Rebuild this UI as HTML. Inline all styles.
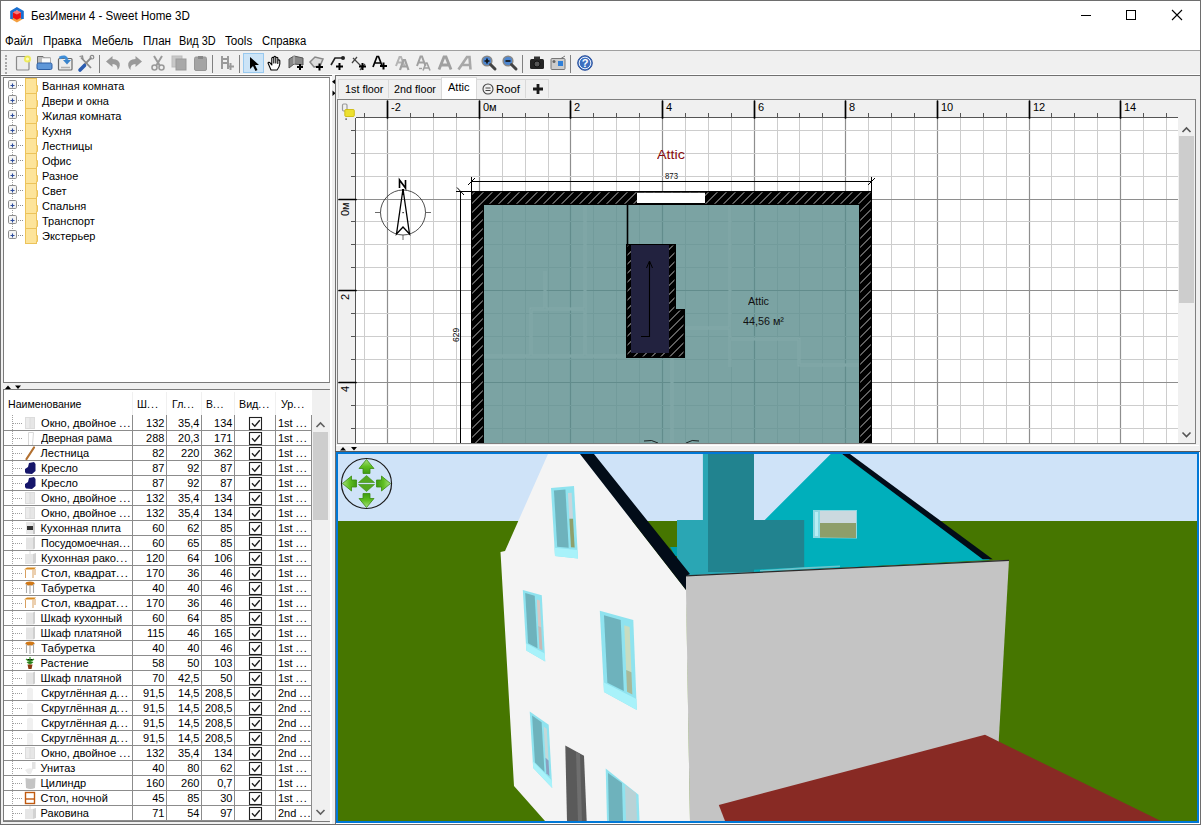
<!DOCTYPE html><html><head><meta charset="utf-8"><style>
*{margin:0;padding:0;box-sizing:border-box}
html,body{width:1201px;height:825px;overflow:hidden;background:#f0f0f0;font-family:"Liberation Sans",sans-serif;font-size:12px;color:#000;position:relative}
.a{position:absolute}
.t{position:absolute;white-space:nowrap;line-height:1}
svg{position:absolute;overflow:visible}
</style></head><body>

<div class="a" style="left:0px;top:0px;width:1201px;height:50px;background:#fff;"></div>
<div class="a" style="left:0px;top:50px;width:1201px;height:1px;background:#a0a0a0;"></div>
<svg style="left:0;top:0" width="30" height="30">
<polygon points="10.9,19 16.9,15.5 22.9,19 16.9,22.6" fill="#f4a040"/>
<polygon points="16.9,7 23.8,11 23.8,19 20.9,19 20.9,12.5 16.9,10.2 12.9,12.5 12.9,19 10.2,19 10.2,11" fill="#1a6fd0"/>
<polygon points="16.9,10.5 20.9,12.5 20.9,17.8 16.9,19.8 12.9,17.8 12.9,12.5" fill="#ee1010"/>
<polygon points="16.9,10.5 20.9,12.5 16.9,14.5 12.9,12.5" fill="#f77c7c"/>
</svg>
<div class="t" style="left:30.50px;top:10.34px;font-size:12px;color:#000;transform:scaleX(0.9637);transform-origin:0 0;">БезИмени 4 - Sweet Home 3D</div>
<div class="a" style="left:1081px;top:15px;width:10px;height:1px;background:#000;"></div>
<div class="a" style="left:1126px;top:10px;width:10px;height:10px;border:1px solid #000"></div>
<svg style="left:1171px;top:9px" width="12" height="12"><path d="M1,1 L11,11 M11,1 L1,11" stroke="#000" stroke-width="1.1"/></svg>
<div class="t" style="left:5.30px;top:34.54px;font-size:12px;color:#000;transform:scaleX(0.9492);transform-origin:0 0;">Файл</div>
<div class="t" style="left:42.70px;top:34.54px;font-size:12px;color:#000;transform:scaleX(0.9524);transform-origin:0 0;">Правка</div>
<div class="t" style="left:92.00px;top:34.54px;font-size:12px;color:#000;transform:scaleX(0.9619);transform-origin:0 0;">Мебель</div>
<div class="t" style="left:142.70px;top:34.54px;font-size:12px;color:#000;transform:scaleX(0.9681);transform-origin:0 0;">План</div>
<div class="t" style="left:179.30px;top:34.54px;font-size:12px;color:#000;transform:scaleX(0.9090);transform-origin:0 0;">Вид 3D</div>
<div class="t" style="left:224.70px;top:34.54px;font-size:12px;color:#000;transform:scaleX(0.9745);transform-origin:0 0;">Tools</div>
<div class="t" style="left:261.70px;top:34.54px;font-size:12px;color:#000;transform:scaleX(0.9410);transform-origin:0 0;">Справка</div>
<div class="a" style="left:0px;top:74px;width:1201px;height:1px;background:#ffffff;"></div>
<div class="a" style="left:0px;top:75px;width:332px;height:1px;background:#707070;"></div>
<div class="a" style="left:335px;top:75px;width:865px;height:1px;background:#707070;"></div>
<div class="a" style="left:330px;top:76px;width:2px;height:749px;background:#ffffff;"></div>
<div class="a" style="left:5px;top:55.0px;width:2px;height:2px;background:#a8a8a8;"></div>
<div class="a" style="left:5px;top:58.3px;width:2px;height:2px;background:#a8a8a8;"></div>
<div class="a" style="left:5px;top:61.6px;width:2px;height:2px;background:#a8a8a8;"></div>
<div class="a" style="left:5px;top:64.9px;width:2px;height:2px;background:#a8a8a8;"></div>
<div class="a" style="left:5px;top:68.2px;width:2px;height:2px;background:#a8a8a8;"></div>
<div class="a" style="left:5px;top:71.5px;width:2px;height:2px;background:#a8a8a8;"></div>
<svg style="left:15px;top:55px" width="16" height="16" viewBox="0 0 16 16"><rect x="1.5" y="1.5" width="12.5" height="13.5" rx="1" fill="#ececec" stroke="#8a8a8a" stroke-width="1.2"/><circle cx="12.5" cy="4" r="3.6" fill="#f0ec50" opacity="0.9"/><circle cx="12.5" cy="4" r="1.6" fill="#fffbc0"/></svg>
<svg style="left:36px;top:55px" width="16" height="16" viewBox="0 0 16 16"><path d="M1.5,14 V1.5 H7 L8.5,3 H14.5 V8" fill="#bdbdbd" stroke="#6e6e6e" stroke-width="1"/><rect x="5.5" y="3" width="9" height="6" fill="#fafafa" stroke="#aaa" stroke-width="0.6"/><rect x="1" y="8" width="15" height="6.5" rx="1.5" fill="#5f97d8" stroke="#2d5fa5" stroke-width="1"/></svg>
<svg style="left:57px;top:55px" width="16" height="16" viewBox="0 0 16 16"><rect x="1.5" y="3.5" width="13.5" height="11.5" rx="1" fill="#ededed" stroke="#6a6a6a" stroke-width="1.2"/><path d="M2.5,3 Q9,0 10,5" stroke="#3f8ed8" stroke-width="3" fill="none"/><path d="M6,5 L14,5 L10,9.5Z" fill="#3a84cc"/><path d="M4,12.5 H13" stroke="#b0b0b0" stroke-width="1.5"/></svg>
<svg style="left:78px;top:55px" width="16" height="16" viewBox="0 0 16 16"><path d="M3,2.5 L13,13" stroke="#8a8a8a" stroke-width="1.8"/><path d="M13.5,2.5 L6,10" stroke="#8a8a8a" stroke-width="1.8"/><circle cx="14" cy="2.2" r="1.8" fill="none" stroke="#8a8a8a" stroke-width="1.2"/><path d="M1.5,1.5 L4.5,1 L5,4" stroke="#8a8a8a" stroke-width="1.2" fill="none"/><path d="M2,15 L6.5,10.5" stroke="#2a5cb0" stroke-width="3.6" stroke-linecap="round"/></svg>
<div class="a" style="left:99px;top:55px;width:1px;height:18px;background:#808080;"></div>
<svg style="left:105px;top:55px" width="16" height="16" viewBox="0 0 16 16"><path d="M1,6.5 L7.5,1 V4 Q15,4 14.8,10.5 Q14.5,13.5 12.5,15 Q13,9 7.5,9 V12 Z" fill="#9a9a9a"/></svg>
<svg style="left:127px;top:55px" width="16" height="16" viewBox="0 0 16 16"><path d="M15,6.5 L8.5,1 V4 Q1,4 1.2,10.5 Q1.5,13.5 3.5,15 Q3,9 8.5,9 V12 Z" fill="#9a9a9a"/></svg>
<svg style="left:150px;top:55px" width="16" height="16" viewBox="0 0 16 16"><path d="M4,1 L10,11 M12,1 L6,11" stroke="#9a9a9a" stroke-width="2"/><circle cx="4.5" cy="12.5" r="2.5" fill="none" stroke="#9a9a9a" stroke-width="1.6"/><circle cx="11.5" cy="12.5" r="2.5" fill="none" stroke="#9a9a9a" stroke-width="1.6"/></svg>
<svg style="left:171px;top:55px" width="16" height="16" viewBox="0 0 16 16"><rect x="1" y="1" width="10" height="11" fill="#c8c8c8" stroke="#bbb"/><rect x="5" y="4" width="10" height="11" fill="#a8a8a8" stroke="#999"/></svg>
<svg style="left:193px;top:55px" width="16" height="16" viewBox="0 0 16 16"><rect x="1.5" y="2" width="12" height="13.5" rx="1.5" fill="#a4a4a4" stroke="#969696"/><rect x="5" y="1" width="5" height="3" fill="#888"/></svg>
<div class="a" style="left:212px;top:55px;width:1px;height:18px;background:#808080;"></div>
<svg style="left:219px;top:55px" width="16" height="16" viewBox="0 0 16 16"><path d="M3,1 V14 M3,8 H9 V14 M9,1 V8 M3,4 H9" stroke="#9a9a9a" stroke-width="2" fill="none"/><path d="M8,11.5 H15 M11.5,8 V15" stroke="#9a9a9a" stroke-width="2"/></svg>
<div class="a" style="left:239px;top:55px;width:1px;height:18px;background:#808080;"></div>
<div class="a" style="left:243px;top:53px;width:21px;height:20px;background:#cce4f7;border:1px solid #99c9ef"></div>
<svg style="left:246px;top:55px" width="16" height="16" viewBox="0 0 16 16"><path d="M4,2 L4,14 L7,11 L9.5,16 L11.5,15 L9,10 L13,10 Z" fill="#000"/></svg>
<svg style="left:266px;top:55px" width="16" height="16" viewBox="0 0 16 16"><path d="M5,15 L11,15 Q13.5,12 13.8,9 L13.8,5.5 Q12.8,4.3 11.8,5.5 L11.8,8.5 L11.8,2.8 Q10.8,1.6 9.8,2.8 L9.8,8 L9.8,2 Q8.8,0.8 7.8,2 L7.8,8 L7.8,3 Q6.8,1.8 5.8,3 L5.8,10 L3.8,7.6 Q2.6,6.9 2,8 Q3.5,11.5 5,15Z" fill="#fff" stroke="#000" stroke-width="1.1" stroke-linejoin="round"/></svg>
<svg style="left:288px;top:55px" width="16" height="16" viewBox="0 0 16 16"><path d="M1,4 L6,1 L15,3 L15,10 L6,9 L1,13 Z" fill="#888" stroke="#555"/><path d="M6,1 V9" stroke="#ccc"/><path d="M9,12 H15 M12,9 V15" stroke="#000" stroke-width="2"/></svg>
<svg style="left:309px;top:55px" width="16" height="16" viewBox="0 0 16 16"><path d="M1,7 L6,2 L14,4 L11,11 L5,12 Z" fill="#ddd" stroke="#888" stroke-width="1.5"/><path d="M7,12 H14 M10.5,8.5 V15.5" stroke="#000" stroke-width="2"/></svg>
<svg style="left:330px;top:55px" width="16" height="16" viewBox="0 0 16 16"><path d="M1,10 L5,3 L12,3" stroke="#222" stroke-width="1.6" fill="none"/><circle cx="13" cy="3" r="2" fill="#222"/><path d="M6,11.5 H13 M9.5,8 V15" stroke="#000" stroke-width="2"/></svg>
<svg style="left:351px;top:55px" width="16" height="16" viewBox="0 0 16 16"><path d="M2,3 L12,13 M1,8 L6,2 M9,15 L14,9" stroke="#444" stroke-width="1.2"/><path d="M8,11.5 H15 M11.5,8 V15" stroke="#000" stroke-width="2"/></svg>
<svg style="left:372px;top:55px" width="16" height="16" viewBox="0 0 16 16"><path d="M1,12 L5,1.5 L6.5,1.5 L10.5,12 M3,8 H8.5" stroke="#000" stroke-width="1.7" fill="none"/><path d="M8,11 H15 M11.5,7.5 V14.5" stroke="#000" stroke-width="2"/></svg>
<svg style="left:395px;top:55px" width="16" height="16" viewBox="0 0 16 16"><path d="M1,11 L4.5,2 L6,2 L9.5,11 M2.5,7.5 H8" stroke="#b4b4b4" stroke-width="2" fill="none"/><path d="M5,15 L8.5,5 L10,5 L13.5,15 M6.5,11.5 H12" stroke="#a0a0a0" stroke-width="2.2" fill="none"/></svg>
<svg style="left:416px;top:55px" width="16" height="16" viewBox="0 0 16 16"><path d="M1,11 L4.5,1.5 L6,1.5 L9.5,11 M2.5,7.5 H8" stroke="#a0a0a0" stroke-width="2" fill="none"/><path d="M7,15.5 L10,8 L11,8 L14,15.5 M8,13 H13" stroke="#a0a0a0" stroke-width="1.6" fill="none"/><path d="M3,13.5 H6" stroke="#a0a0a0" stroke-width="1.4"/></svg>
<svg style="left:437px;top:55px" width="16" height="16" viewBox="0 0 16 16"><path d="M2,14.5 L7,2 L9,2 L14,14.5 M4.5,10 H11.5" stroke="#a0a0a0" stroke-width="2.8" fill="none"/></svg>
<svg style="left:458px;top:55px" width="16" height="16" viewBox="0 0 16 16"><path d="M0.5,14.5 L9,2 L11.5,2 L12.5,14.5 M4,10 H12" stroke="#a8a8a8" stroke-width="2.6" fill="none"/></svg>
<svg style="left:481px;top:55px" width="16" height="16" viewBox="0 0 16 16"><circle cx="6" cy="6" r="4.8" fill="#4d86d0" stroke="#888" stroke-width="1.6"/><path d="M3.5,6 H8.5 M6,3.5 V8.5" stroke="#111" stroke-width="1.6"/><path d="M9.5,9.5 L14,14" stroke="#444" stroke-width="3" stroke-linecap="round"/></svg>
<svg style="left:502px;top:55px" width="16" height="16" viewBox="0 0 16 16"><circle cx="6" cy="6" r="4.8" fill="#4d86d0" stroke="#888" stroke-width="1.6"/><path d="M3.5,6 H8.5" stroke="#111" stroke-width="1.6"/><path d="M9.5,9.5 L14,14" stroke="#444" stroke-width="3" stroke-linecap="round"/></svg>
<div class="a" style="left:522px;top:55px;width:1px;height:18px;background:#808080;"></div>
<svg style="left:529px;top:55px" width="16" height="16" viewBox="0 0 16 16"><rect x="1" y="4" width="14" height="10" rx="1.5" fill="#222"/><rect x="5" y="1.5" width="6" height="3" fill="#333"/><circle cx="8" cy="9" r="3" fill="#555" stroke="#111"/></svg>
<svg style="left:550px;top:55px" width="16" height="16" viewBox="0 0 16 16"><rect x="1" y="3.5" width="14" height="11" rx="1" fill="#ccc" stroke="#777"/><rect x="8" y="6" width="5" height="5" fill="#2f7fd8"/><circle cx="4" cy="6.5" r="1.5" fill="#666"/><path d="M11,3.5 L15,1" stroke="#777"/></svg>
<div class="a" style="left:570px;top:55px;width:1px;height:18px;background:#808080;"></div>
<svg style="left:577px;top:55px" width="16" height="16" viewBox="0 0 16 16"><circle cx="8" cy="8" r="7.3" fill="#3c6fc0" stroke="#2a4f9a"/><circle cx="8" cy="8" r="5.8" fill="none" stroke="#fff" stroke-width="0.9"/><text x="4.8" y="12.2" font-family="Liberation Sans" font-size="11" font-weight="bold" fill="#fff">?</text></svg>
<div class="a" style="left:3px;top:77px;width:327px;height:306px;background:#fff;border:1px solid #7a7a7a;border-right-color:#8c8c8c"></div>
<svg style="left:0;top:0" width="340" height="260"><path d="M12.5,90 V229" stroke="#a0a0a0" stroke-dasharray="1,1"/><path d="M18,85.5 H24" stroke="#909090" stroke-dasharray="1,1"/><rect x="8.5" y="80.5" width="8" height="8" rx="1.2" fill="#f4f4f4" stroke="#8e8e8e"/><path d="M10.5,85.5 H14.5 M12.5,83.5 V87.5" stroke="#2c4c9c" stroke-width="1.1"/><rect x="25.5" y="78.5" width="11" height="15" fill="#fde49a" stroke="#ecc35a"/><path d="M36.5,85.5 h1 v6 h-1" fill="#fde49a" stroke="#ecc35a"/><path d="M18,100.5 H24" stroke="#909090" stroke-dasharray="1,1"/><rect x="8.5" y="95.5" width="8" height="8" rx="1.2" fill="#f4f4f4" stroke="#8e8e8e"/><path d="M10.5,100.5 H14.5 M12.5,98.5 V102.5" stroke="#2c4c9c" stroke-width="1.1"/><rect x="25.5" y="93.5" width="11" height="15" fill="#fde49a" stroke="#ecc35a"/><path d="M36.5,100.5 h1 v6 h-1" fill="#fde49a" stroke="#ecc35a"/><path d="M18,115.5 H24" stroke="#909090" stroke-dasharray="1,1"/><rect x="8.5" y="110.5" width="8" height="8" rx="1.2" fill="#f4f4f4" stroke="#8e8e8e"/><path d="M10.5,115.5 H14.5 M12.5,113.5 V117.5" stroke="#2c4c9c" stroke-width="1.1"/><rect x="25.5" y="108.5" width="11" height="15" fill="#fde49a" stroke="#ecc35a"/><path d="M36.5,115.5 h1 v6 h-1" fill="#fde49a" stroke="#ecc35a"/><path d="M18,130.5 H24" stroke="#909090" stroke-dasharray="1,1"/><rect x="8.5" y="125.5" width="8" height="8" rx="1.2" fill="#f4f4f4" stroke="#8e8e8e"/><path d="M10.5,130.5 H14.5 M12.5,128.5 V132.5" stroke="#2c4c9c" stroke-width="1.1"/><rect x="25.5" y="123.5" width="11" height="15" fill="#fde49a" stroke="#ecc35a"/><path d="M36.5,130.5 h1 v6 h-1" fill="#fde49a" stroke="#ecc35a"/><path d="M18,145.5 H24" stroke="#909090" stroke-dasharray="1,1"/><rect x="8.5" y="140.5" width="8" height="8" rx="1.2" fill="#f4f4f4" stroke="#8e8e8e"/><path d="M10.5,145.5 H14.5 M12.5,143.5 V147.5" stroke="#2c4c9c" stroke-width="1.1"/><rect x="25.5" y="138.5" width="11" height="15" fill="#fde49a" stroke="#ecc35a"/><path d="M36.5,145.5 h1 v6 h-1" fill="#fde49a" stroke="#ecc35a"/><path d="M18,160.5 H24" stroke="#909090" stroke-dasharray="1,1"/><rect x="8.5" y="155.5" width="8" height="8" rx="1.2" fill="#f4f4f4" stroke="#8e8e8e"/><path d="M10.5,160.5 H14.5 M12.5,158.5 V162.5" stroke="#2c4c9c" stroke-width="1.1"/><rect x="25.5" y="153.5" width="11" height="15" fill="#fde49a" stroke="#ecc35a"/><path d="M36.5,160.5 h1 v6 h-1" fill="#fde49a" stroke="#ecc35a"/><path d="M18,175.5 H24" stroke="#909090" stroke-dasharray="1,1"/><rect x="8.5" y="170.5" width="8" height="8" rx="1.2" fill="#f4f4f4" stroke="#8e8e8e"/><path d="M10.5,175.5 H14.5 M12.5,173.5 V177.5" stroke="#2c4c9c" stroke-width="1.1"/><rect x="25.5" y="168.5" width="11" height="15" fill="#fde49a" stroke="#ecc35a"/><path d="M36.5,175.5 h1 v6 h-1" fill="#fde49a" stroke="#ecc35a"/><path d="M18,190.5 H24" stroke="#909090" stroke-dasharray="1,1"/><rect x="8.5" y="185.5" width="8" height="8" rx="1.2" fill="#f4f4f4" stroke="#8e8e8e"/><path d="M10.5,190.5 H14.5 M12.5,188.5 V192.5" stroke="#2c4c9c" stroke-width="1.1"/><rect x="25.5" y="183.5" width="11" height="15" fill="#fde49a" stroke="#ecc35a"/><path d="M36.5,190.5 h1 v6 h-1" fill="#fde49a" stroke="#ecc35a"/><path d="M18,205.5 H24" stroke="#909090" stroke-dasharray="1,1"/><rect x="8.5" y="200.5" width="8" height="8" rx="1.2" fill="#f4f4f4" stroke="#8e8e8e"/><path d="M10.5,205.5 H14.5 M12.5,203.5 V207.5" stroke="#2c4c9c" stroke-width="1.1"/><rect x="25.5" y="198.5" width="11" height="15" fill="#fde49a" stroke="#ecc35a"/><path d="M36.5,205.5 h1 v6 h-1" fill="#fde49a" stroke="#ecc35a"/><path d="M18,220.5 H24" stroke="#909090" stroke-dasharray="1,1"/><rect x="8.5" y="215.5" width="8" height="8" rx="1.2" fill="#f4f4f4" stroke="#8e8e8e"/><path d="M10.5,220.5 H14.5 M12.5,218.5 V222.5" stroke="#2c4c9c" stroke-width="1.1"/><rect x="25.5" y="213.5" width="11" height="15" fill="#fde49a" stroke="#ecc35a"/><path d="M36.5,220.5 h1 v6 h-1" fill="#fde49a" stroke="#ecc35a"/><path d="M18,235.5 H24" stroke="#909090" stroke-dasharray="1,1"/><rect x="8.5" y="230.5" width="8" height="8" rx="1.2" fill="#f4f4f4" stroke="#8e8e8e"/><path d="M10.5,235.5 H14.5 M12.5,233.5 V237.5" stroke="#2c4c9c" stroke-width="1.1"/><rect x="25.5" y="228.5" width="11" height="15" fill="#fde49a" stroke="#ecc35a"/><path d="M36.5,235.5 h1 v6 h-1" fill="#fde49a" stroke="#ecc35a"/></svg>
<div class="t" style="left:42.00px;top:81.19px;font-size:11px;color:#000;">Ванная комната</div>
<div class="t" style="left:42.00px;top:96.19px;font-size:11px;color:#000;">Двери и окна</div>
<div class="t" style="left:42.00px;top:111.19px;font-size:11px;color:#000;">Жилая комната</div>
<div class="t" style="left:42.00px;top:126.19px;font-size:11px;color:#000;">Кухня</div>
<div class="t" style="left:42.00px;top:141.19px;font-size:11px;color:#000;">Лестницы</div>
<div class="t" style="left:42.00px;top:156.19px;font-size:11px;color:#000;">Офис</div>
<div class="t" style="left:42.00px;top:171.19px;font-size:11px;color:#000;">Разное</div>
<div class="t" style="left:42.00px;top:186.19px;font-size:11px;color:#000;">Свет</div>
<div class="t" style="left:42.00px;top:201.19px;font-size:11px;color:#000;">Спальня</div>
<div class="t" style="left:42.00px;top:216.19px;font-size:11px;color:#000;">Транспорт</div>
<div class="t" style="left:42.00px;top:231.19px;font-size:11px;color:#000;">Экстерьер</div>
<svg style="left:0;top:383px" width="30" height="8"><path d="M5,6 L8,2.5 L11,6Z M15,2.5 L21,2.5 L18,6Z" fill="#000"/></svg>
<div class="a" style="left:3px;top:389px;width:327px;height:433px;background:#fff;border:1px solid #7a7a7a;border-right-color:#8c8c8c"></div>
<div class="a" style="left:4px;top:390px;width:307px;height:25px;background:#fff;"></div>
<div class="a" style="left:132px;top:392px;width:1px;height:23px;background:#f0f0f0;"></div>
<div class="a" style="left:166px;top:392px;width:1px;height:23px;background:#f0f0f0;"></div>
<div class="a" style="left:201px;top:392px;width:1px;height:23px;background:#f0f0f0;"></div>
<div class="a" style="left:234px;top:392px;width:1px;height:23px;background:#f0f0f0;"></div>
<div class="a" style="left:275px;top:392px;width:1px;height:23px;background:#f0f0f0;"></div>
<div class="t" style="left:7.90px;top:398.69px;font-size:11px;color:#000;transform:scaleX(0.9635);transform-origin:0 0;">Наименование</div>
<div class="t" style="left:137.40px;top:398.69px;font-size:11px;color:#000;transform:scaleX(0.9881);transform-origin:0 0;">Ш<span style="letter-spacing:1px">...</span></div>
<div class="t" style="left:172.20px;top:398.69px;font-size:11px;color:#000;transform:scaleX(0.9608);transform-origin:0 0;">Гл<span style="letter-spacing:1px">...</span></div>
<div class="t" style="left:206.10px;top:398.69px;font-size:11px;color:#000;transform:scaleX(0.9421);transform-origin:0 0;">В<span style="letter-spacing:1px">...</span></div>
<div class="t" style="left:239.10px;top:398.69px;font-size:11px;color:#000;transform:scaleX(0.9722);transform-origin:0 0;">Вид<span style="letter-spacing:1px">...</span></div>
<div class="t" style="left:280.80px;top:398.69px;font-size:11px;color:#000;transform:scaleX(0.9800);transform-origin:0 0;">Ур<span style="letter-spacing:1px">...</span></div>
<svg style="left:0;top:0" width="340" height="825"><clipPath id="tc"><rect x="4" y="390" width="326" height="431"/></clipPath><g clip-path="url(#tc)"><path d="M132.5,415 V825" stroke="#8c8c8c"/><path d="M166.5,415 V825" stroke="#8c8c8c"/><path d="M201.5,415 V825" stroke="#8c8c8c"/><path d="M234.5,415 V825" stroke="#8c8c8c"/><path d="M275.5,415 V825" stroke="#8c8c8c"/><path d="M311.5,415 V825" stroke="#8c8c8c"/><path d="M4,430.5 H311" stroke="#8c8c8c"/><path d="M4,445.5 H311" stroke="#8c8c8c"/><path d="M4,460.5 H311" stroke="#8c8c8c"/><path d="M4,475.5 H311" stroke="#8c8c8c"/><path d="M4,490.5 H311" stroke="#8c8c8c"/><path d="M4,505.5 H311" stroke="#8c8c8c"/><path d="M4,520.5 H311" stroke="#8c8c8c"/><path d="M4,535.5 H311" stroke="#8c8c8c"/><path d="M4,550.5 H311" stroke="#8c8c8c"/><path d="M4,565.5 H311" stroke="#8c8c8c"/><path d="M4,580.5 H311" stroke="#8c8c8c"/><path d="M4,595.5 H311" stroke="#8c8c8c"/><path d="M4,610.5 H311" stroke="#8c8c8c"/><path d="M4,625.5 H311" stroke="#8c8c8c"/><path d="M4,640.5 H311" stroke="#8c8c8c"/><path d="M4,655.5 H311" stroke="#8c8c8c"/><path d="M4,670.5 H311" stroke="#8c8c8c"/><path d="M4,685.5 H311" stroke="#8c8c8c"/><path d="M4,700.5 H311" stroke="#8c8c8c"/><path d="M4,715.5 H311" stroke="#8c8c8c"/><path d="M4,730.5 H311" stroke="#8c8c8c"/><path d="M4,745.5 H311" stroke="#8c8c8c"/><path d="M4,760.5 H311" stroke="#8c8c8c"/><path d="M4,775.5 H311" stroke="#8c8c8c"/><path d="M4,790.5 H311" stroke="#8c8c8c"/><path d="M4,805.5 H311" stroke="#8c8c8c"/><path d="M4,820.5 H311" stroke="#8c8c8c"/><path d="M12.5,415 V825" stroke="#a0a0a0" stroke-dasharray="1,1"/><path d="M13,423.5 H23" stroke="#a0a0a0" stroke-dasharray="1,1"/><rect x="25" y="417" width="10" height="12" fill="#dcdcdc"/><rect x="26" y="418" width="3.5" height="10" fill="#ececec"/><rect x="30.5" y="418" width="3.5" height="10" fill="#e6e6e6"/><rect x="249.5" y="417.5" width="12" height="12" fill="#fff" stroke="#222" stroke-width="1.1"/><path d="M252,423.3 L254.8,426.2 L259.8,420.2" stroke="#222" stroke-width="1.4" fill="none"/><path d="M13,438.5 H23" stroke="#a0a0a0" stroke-dasharray="1,1"/><path d="M28.5,445 V432.5 H33.5 L32.5,445" fill="none" stroke="#d8d8d8" stroke-width="1"/><rect x="249.5" y="432.5" width="12" height="12" fill="#fff" stroke="#222" stroke-width="1.1"/><path d="M252,438.3 L254.8,441.2 L259.8,435.2" stroke="#222" stroke-width="1.4" fill="none"/><path d="M13,453.5 H23" stroke="#a0a0a0" stroke-dasharray="1,1"/><path d="M26.5,459 L34,447.5" stroke="#b27030" stroke-width="2.2" stroke-linecap="round"/><rect x="249.5" y="447.5" width="12" height="12" fill="#fff" stroke="#222" stroke-width="1.1"/><path d="M252,453.3 L254.8,456.2 L259.8,450.2" stroke="#222" stroke-width="1.4" fill="none"/><path d="M13,468.5 H23" stroke="#a0a0a0" stroke-dasharray="1,1"/><path d="M25,469 L28,467 L29,463 L34,462 L35.5,464 L35.5,471 L32,474 L26,473.5 L25,472Z" fill="#15156a"/><rect x="249.5" y="462.5" width="12" height="12" fill="#fff" stroke="#222" stroke-width="1.1"/><path d="M252,468.3 L254.8,471.2 L259.8,465.2" stroke="#222" stroke-width="1.4" fill="none"/><path d="M13,483.5 H23" stroke="#a0a0a0" stroke-dasharray="1,1"/><path d="M25,484 L28,482 L29,478 L34,477 L35.5,479 L35.5,486 L32,489 L26,488.5 L25,487Z" fill="#15156a"/><rect x="249.5" y="477.5" width="12" height="12" fill="#fff" stroke="#222" stroke-width="1.1"/><path d="M252,483.3 L254.8,486.2 L259.8,480.2" stroke="#222" stroke-width="1.4" fill="none"/><path d="M13,498.5 H23" stroke="#a0a0a0" stroke-dasharray="1,1"/><rect x="25" y="492" width="10" height="12" fill="#dcdcdc"/><rect x="26" y="493" width="3.5" height="10" fill="#ececec"/><rect x="30.5" y="493" width="3.5" height="10" fill="#e6e6e6"/><rect x="249.5" y="492.5" width="12" height="12" fill="#fff" stroke="#222" stroke-width="1.1"/><path d="M252,498.3 L254.8,501.2 L259.8,495.2" stroke="#222" stroke-width="1.4" fill="none"/><path d="M13,513.5 H23" stroke="#a0a0a0" stroke-dasharray="1,1"/><rect x="25" y="507" width="10" height="12" fill="#dcdcdc"/><rect x="26" y="508" width="3.5" height="10" fill="#ececec"/><rect x="30.5" y="508" width="3.5" height="10" fill="#e6e6e6"/><rect x="249.5" y="507.5" width="12" height="12" fill="#fff" stroke="#222" stroke-width="1.1"/><path d="M252,513.3 L254.8,516.2 L259.8,510.2" stroke="#222" stroke-width="1.4" fill="none"/><path d="M13,528.5 H23" stroke="#a0a0a0" stroke-dasharray="1,1"/><path d="M26,522 H34 L35,523 V534 H26Z" fill="#e8e8e8"/><rect x="27" y="526" width="6" height="4" fill="#333"/><rect x="33" y="523" width="2" height="11" fill="#c8c8c8"/><rect x="249.5" y="522.5" width="12" height="12" fill="#fff" stroke="#222" stroke-width="1.1"/><path d="M252,528.3 L254.8,531.2 L259.8,525.2" stroke="#222" stroke-width="1.4" fill="none"/><path d="M13,543.5 H23" stroke="#a0a0a0" stroke-dasharray="1,1"/><rect x="26" y="537.5" width="7" height="12" fill="#e4e4e4"/><path d="M33,537.5 L35,536.5 V548.5 L33,549.5Z" fill="#cfcfcf"/><rect x="249.5" y="537.5" width="12" height="12" fill="#fff" stroke="#222" stroke-width="1.1"/><path d="M252,543.3 L254.8,546.2 L259.8,540.2" stroke="#222" stroke-width="1.4" fill="none"/><path d="M13,558.5 H23" stroke="#a0a0a0" stroke-dasharray="1,1"/><rect x="25" y="554" width="8" height="10" fill="#e6e6e6"/><path d="M33,554 L36,553 V563 L33,564Z" fill="#d2d2d2"/><path d="M30,551 V554" stroke="#ddd"/><rect x="249.5" y="552.5" width="12" height="12" fill="#fff" stroke="#222" stroke-width="1.1"/><path d="M252,558.3 L254.8,561.2 L259.8,555.2" stroke="#222" stroke-width="1.4" fill="none"/><path d="M13,573.5 H23" stroke="#a0a0a0" stroke-dasharray="1,1"/><path d="M24,569.5 L27,567.5 H36 L34,569.5Z" fill="#d88a20"/><path d="M25.5,570 V578 M33,570 V578 M35,569 V575" stroke="#d8a060" stroke-width="1"/><rect x="249.5" y="567.5" width="12" height="12" fill="#fff" stroke="#222" stroke-width="1.1"/><path d="M252,573.3 L254.8,576.2 L259.8,570.2" stroke="#222" stroke-width="1.4" fill="none"/><path d="M13,588.5 H23" stroke="#a0a0a0" stroke-dasharray="1,1"/><ellipse cx="30" cy="583.5" rx="4.5" ry="2" fill="#d07818"/><path d="M26.5,584 V593 M33.5,584 V593 M30,585 V594" stroke="#aaa" stroke-width="1.1"/><rect x="249.5" y="582.5" width="12" height="12" fill="#fff" stroke="#222" stroke-width="1.1"/><path d="M252,588.3 L254.8,591.2 L259.8,585.2" stroke="#222" stroke-width="1.4" fill="none"/><path d="M13,603.5 H23" stroke="#a0a0a0" stroke-dasharray="1,1"/><path d="M24,599.5 L27,597.5 H36 L34,599.5Z" fill="#d88a20"/><path d="M25.5,600 V608 M33,600 V608 M35,599 V605" stroke="#d8a060" stroke-width="1"/><rect x="249.5" y="597.5" width="12" height="12" fill="#fff" stroke="#222" stroke-width="1.1"/><path d="M252,603.3 L254.8,606.2 L259.8,600.2" stroke="#222" stroke-width="1.4" fill="none"/><path d="M13,618.5 H23" stroke="#a0a0a0" stroke-dasharray="1,1"/><rect x="26" y="612.5" width="7" height="12" fill="#e4e4e4"/><path d="M33,612.5 L35,611.5 V623.5 L33,624.5Z" fill="#cfcfcf"/><rect x="249.5" y="612.5" width="12" height="12" fill="#fff" stroke="#222" stroke-width="1.1"/><path d="M252,618.3 L254.8,621.2 L259.8,615.2" stroke="#222" stroke-width="1.4" fill="none"/><path d="M13,633.5 H23" stroke="#a0a0a0" stroke-dasharray="1,1"/><rect x="26" y="627.5" width="7" height="12" fill="#e4e4e4"/><path d="M33,627.5 L35,626.5 V638.5 L33,639.5Z" fill="#cfcfcf"/><rect x="249.5" y="627.5" width="12" height="12" fill="#fff" stroke="#222" stroke-width="1.1"/><path d="M252,633.3 L254.8,636.2 L259.8,630.2" stroke="#222" stroke-width="1.4" fill="none"/><path d="M13,648.5 H23" stroke="#a0a0a0" stroke-dasharray="1,1"/><ellipse cx="30" cy="643.5" rx="4.5" ry="2" fill="#d07818"/><path d="M26.5,644 V653 M33.5,644 V653 M30,645 V654" stroke="#aaa" stroke-width="1.1"/><rect x="249.5" y="642.5" width="12" height="12" fill="#fff" stroke="#222" stroke-width="1.1"/><path d="M252,648.3 L254.8,651.2 L259.8,645.2" stroke="#222" stroke-width="1.4" fill="none"/><path d="M13,663.5 H23" stroke="#a0a0a0" stroke-dasharray="1,1"/><path d="M30,657 L30,664 M26,659 L30,662 L34,659 M27,662 L30,664 L33,662" stroke="#3a9a2a" stroke-width="1.2"/><path d="M27.5,664.5 H32.5 L31.5,669 H28.5Z" fill="#8a3a10"/><rect x="249.5" y="657.5" width="12" height="12" fill="#fff" stroke="#222" stroke-width="1.1"/><path d="M252,663.3 L254.8,666.2 L259.8,660.2" stroke="#222" stroke-width="1.4" fill="none"/><path d="M13,678.5 H23" stroke="#a0a0a0" stroke-dasharray="1,1"/><rect x="26" y="672.5" width="7" height="12" fill="#e4e4e4"/><path d="M33,672.5 L35,671.5 V683.5 L33,684.5Z" fill="#cfcfcf"/><rect x="249.5" y="672.5" width="12" height="12" fill="#fff" stroke="#222" stroke-width="1.1"/><path d="M252,678.3 L254.8,681.2 L259.8,675.2" stroke="#222" stroke-width="1.4" fill="none"/><path d="M13,693.5 H23" stroke="#a0a0a0" stroke-dasharray="1,1"/><path d="M27,700 V689 Q30,686 33,689 V700Z" fill="#f0f0f0"/><rect x="249.5" y="687.5" width="12" height="12" fill="#fff" stroke="#222" stroke-width="1.1"/><path d="M252,693.3 L254.8,696.2 L259.8,690.2" stroke="#222" stroke-width="1.4" fill="none"/><path d="M13,708.5 H23" stroke="#a0a0a0" stroke-dasharray="1,1"/><path d="M27,715 V704 Q30,701 33,704 V715Z" fill="#f0f0f0"/><rect x="249.5" y="702.5" width="12" height="12" fill="#fff" stroke="#222" stroke-width="1.1"/><path d="M252,708.3 L254.8,711.2 L259.8,705.2" stroke="#222" stroke-width="1.4" fill="none"/><path d="M13,723.5 H23" stroke="#a0a0a0" stroke-dasharray="1,1"/><path d="M27,730 V719 Q30,716 33,719 V730Z" fill="#f0f0f0"/><rect x="249.5" y="717.5" width="12" height="12" fill="#fff" stroke="#222" stroke-width="1.1"/><path d="M252,723.3 L254.8,726.2 L259.8,720.2" stroke="#222" stroke-width="1.4" fill="none"/><path d="M13,738.5 H23" stroke="#a0a0a0" stroke-dasharray="1,1"/><path d="M27,745 V734 Q30,731 33,734 V745Z" fill="#f0f0f0"/><rect x="249.5" y="732.5" width="12" height="12" fill="#fff" stroke="#222" stroke-width="1.1"/><path d="M252,738.3 L254.8,741.2 L259.8,735.2" stroke="#222" stroke-width="1.4" fill="none"/><path d="M13,753.5 H23" stroke="#a0a0a0" stroke-dasharray="1,1"/><rect x="25" y="747" width="10" height="12" fill="#dcdcdc"/><rect x="26" y="748" width="3.5" height="10" fill="#ececec"/><rect x="30.5" y="748" width="3.5" height="10" fill="#e6e6e6"/><rect x="249.5" y="747.5" width="12" height="12" fill="#fff" stroke="#222" stroke-width="1.1"/><path d="M252,753.3 L254.8,756.2 L259.8,750.2" stroke="#222" stroke-width="1.4" fill="none"/><path d="M13,768.5 H23" stroke="#a0a0a0" stroke-dasharray="1,1"/><path d="M25,770 Q29,767 33,769 L31,774 H28Z" fill="#ececec"/><rect x="32" y="762" width="3.5" height="7" fill="#e2e2e2"/><rect x="249.5" y="762.5" width="12" height="12" fill="#fff" stroke="#222" stroke-width="1.1"/><path d="M252,768.3 L254.8,771.2 L259.8,765.2" stroke="#222" stroke-width="1.4" fill="none"/><path d="M13,783.5 H23" stroke="#a0a0a0" stroke-dasharray="1,1"/><path d="M25.5,778 Q30.5,779.5 35.5,778 L35,788 Q30.5,790 26,788Z" fill="#c4c4c4"/><rect x="249.5" y="777.5" width="12" height="12" fill="#fff" stroke="#222" stroke-width="1.1"/><path d="M252,783.3 L254.8,786.2 L259.8,780.2" stroke="#222" stroke-width="1.4" fill="none"/><path d="M13,798.5 H23" stroke="#a0a0a0" stroke-dasharray="1,1"/><rect x="25.5" y="792.5" width="9" height="11" fill="none" stroke="#c05a10" stroke-width="1.4"/><path d="M25.5,799 H34.5" stroke="#c05a10" stroke-width="1.4"/><rect x="249.5" y="792.5" width="12" height="12" fill="#fff" stroke="#222" stroke-width="1.1"/><path d="M252,798.3 L254.8,801.2 L259.8,795.2" stroke="#222" stroke-width="1.4" fill="none"/><path d="M13,813.5 H23" stroke="#a0a0a0" stroke-dasharray="1,1"/><rect x="25" y="809" width="8" height="10" fill="#e6e6e6"/><path d="M33,809 L36,808 V818 L33,819Z" fill="#d2d2d2"/><path d="M30,806 V809" stroke="#ddd"/><rect x="249.5" y="807.5" width="12" height="12" fill="#fff" stroke="#222" stroke-width="1.1"/><path d="M252,813.3 L254.8,816.2 L259.8,810.2" stroke="#222" stroke-width="1.4" fill="none"/></g></svg>
<div class="t" style="left:40.60px;top:417.69px;font-size:11px;color:#000;transform:scaleX(1.0091);transform-origin:0 0;">Окно, двойное <span style="letter-spacing:1px">...</span></div>
<div class="t" style="left:146.12px;top:417.69px;font-size:11px;color:#000;">132</div>
<div class="t" style="left:178.06px;top:417.69px;font-size:11px;color:#000;">35,4</div>
<div class="t" style="left:214.12px;top:417.69px;font-size:11px;color:#000;">134</div>
<div class="t" style="left:278.00px;top:417.69px;font-size:11px;color:#000;">1st <span style="letter-spacing:1px">...</span></div>
<div class="t" style="left:40.60px;top:432.69px;font-size:11px;color:#000;transform:scaleX(0.9783);transform-origin:0 0;">Дверная рама</div>
<div class="t" style="left:146.12px;top:432.69px;font-size:11px;color:#000;">288</div>
<div class="t" style="left:178.06px;top:432.69px;font-size:11px;color:#000;">20,3</div>
<div class="t" style="left:214.12px;top:432.69px;font-size:11px;color:#000;">171</div>
<div class="t" style="left:278.00px;top:432.69px;font-size:11px;color:#000;">1st <span style="letter-spacing:1px">...</span></div>
<div class="t" style="left:40.60px;top:447.69px;font-size:11px;color:#000;">Лестница</div>
<div class="t" style="left:152.25px;top:447.69px;font-size:11px;color:#000;">82</div>
<div class="t" style="left:181.12px;top:447.69px;font-size:11px;color:#000;">220</div>
<div class="t" style="left:214.12px;top:447.69px;font-size:11px;color:#000;">362</div>
<div class="t" style="left:278.00px;top:447.69px;font-size:11px;color:#000;">1st <span style="letter-spacing:1px">...</span></div>
<div class="t" style="left:40.60px;top:462.69px;font-size:11px;color:#000;transform:scaleX(1.0047);transform-origin:0 0;">Кресло</div>
<div class="t" style="left:152.25px;top:462.69px;font-size:11px;color:#000;">87</div>
<div class="t" style="left:187.25px;top:462.69px;font-size:11px;color:#000;">92</div>
<div class="t" style="left:220.25px;top:462.69px;font-size:11px;color:#000;">87</div>
<div class="t" style="left:278.00px;top:462.69px;font-size:11px;color:#000;">1st <span style="letter-spacing:1px">...</span></div>
<div class="t" style="left:40.60px;top:477.69px;font-size:11px;color:#000;transform:scaleX(1.0047);transform-origin:0 0;">Кресло</div>
<div class="t" style="left:152.25px;top:477.69px;font-size:11px;color:#000;">87</div>
<div class="t" style="left:187.25px;top:477.69px;font-size:11px;color:#000;">92</div>
<div class="t" style="left:220.25px;top:477.69px;font-size:11px;color:#000;">87</div>
<div class="t" style="left:278.00px;top:477.69px;font-size:11px;color:#000;">1st <span style="letter-spacing:1px">...</span></div>
<div class="t" style="left:40.60px;top:492.69px;font-size:11px;color:#000;transform:scaleX(1.0091);transform-origin:0 0;">Окно, двойное <span style="letter-spacing:1px">...</span></div>
<div class="t" style="left:146.12px;top:492.69px;font-size:11px;color:#000;">132</div>
<div class="t" style="left:178.06px;top:492.69px;font-size:11px;color:#000;">35,4</div>
<div class="t" style="left:214.12px;top:492.69px;font-size:11px;color:#000;">134</div>
<div class="t" style="left:278.00px;top:492.69px;font-size:11px;color:#000;">1st <span style="letter-spacing:1px">...</span></div>
<div class="t" style="left:40.60px;top:507.69px;font-size:11px;color:#000;transform:scaleX(1.0091);transform-origin:0 0;">Окно, двойное <span style="letter-spacing:1px">...</span></div>
<div class="t" style="left:146.12px;top:507.69px;font-size:11px;color:#000;">132</div>
<div class="t" style="left:178.06px;top:507.69px;font-size:11px;color:#000;">35,4</div>
<div class="t" style="left:214.12px;top:507.69px;font-size:11px;color:#000;">134</div>
<div class="t" style="left:278.00px;top:507.69px;font-size:11px;color:#000;">1st <span style="letter-spacing:1px">...</span></div>
<div class="t" style="left:40.60px;top:522.69px;font-size:11px;color:#000;">Кухонная плита</div>
<div class="t" style="left:152.25px;top:522.69px;font-size:11px;color:#000;">60</div>
<div class="t" style="left:187.25px;top:522.69px;font-size:11px;color:#000;">62</div>
<div class="t" style="left:220.25px;top:522.69px;font-size:11px;color:#000;">85</div>
<div class="t" style="left:278.00px;top:522.69px;font-size:11px;color:#000;">1st <span style="letter-spacing:1px">...</span></div>
<div class="t" style="left:40.60px;top:537.69px;font-size:11px;color:#000;transform:scaleX(0.9704);transform-origin:0 0;">Посудомоечная<span style="letter-spacing:1px">...</span></div>
<div class="t" style="left:152.25px;top:537.69px;font-size:11px;color:#000;">60</div>
<div class="t" style="left:187.25px;top:537.69px;font-size:11px;color:#000;">65</div>
<div class="t" style="left:220.25px;top:537.69px;font-size:11px;color:#000;">85</div>
<div class="t" style="left:278.00px;top:537.69px;font-size:11px;color:#000;">1st <span style="letter-spacing:1px">...</span></div>
<div class="t" style="left:40.60px;top:552.69px;font-size:11px;color:#000;transform:scaleX(1.0150);transform-origin:0 0;">Кухонная рако<span style="letter-spacing:1px">...</span></div>
<div class="t" style="left:146.12px;top:552.69px;font-size:11px;color:#000;">120</div>
<div class="t" style="left:187.25px;top:552.69px;font-size:11px;color:#000;">64</div>
<div class="t" style="left:214.12px;top:552.69px;font-size:11px;color:#000;">106</div>
<div class="t" style="left:278.00px;top:552.69px;font-size:11px;color:#000;">1st <span style="letter-spacing:1px">...</span></div>
<div class="t" style="left:40.60px;top:567.69px;font-size:11px;color:#000;transform:scaleX(1.0525);transform-origin:0 0;">Стол, квадрат<span style="letter-spacing:1px">...</span></div>
<div class="t" style="left:146.12px;top:567.69px;font-size:11px;color:#000;">170</div>
<div class="t" style="left:187.25px;top:567.69px;font-size:11px;color:#000;">36</div>
<div class="t" style="left:220.25px;top:567.69px;font-size:11px;color:#000;">46</div>
<div class="t" style="left:278.00px;top:567.69px;font-size:11px;color:#000;">1st <span style="letter-spacing:1px">...</span></div>
<div class="t" style="left:40.60px;top:582.69px;font-size:11px;color:#000;transform:scaleX(1.0448);transform-origin:0 0;">Табуретка</div>
<div class="t" style="left:152.25px;top:582.69px;font-size:11px;color:#000;">40</div>
<div class="t" style="left:187.25px;top:582.69px;font-size:11px;color:#000;">40</div>
<div class="t" style="left:220.25px;top:582.69px;font-size:11px;color:#000;">46</div>
<div class="t" style="left:278.00px;top:582.69px;font-size:11px;color:#000;">1st <span style="letter-spacing:1px">...</span></div>
<div class="t" style="left:40.60px;top:597.69px;font-size:11px;color:#000;transform:scaleX(1.0525);transform-origin:0 0;">Стол, квадрат<span style="letter-spacing:1px">...</span></div>
<div class="t" style="left:146.12px;top:597.69px;font-size:11px;color:#000;">170</div>
<div class="t" style="left:187.25px;top:597.69px;font-size:11px;color:#000;">36</div>
<div class="t" style="left:220.25px;top:597.69px;font-size:11px;color:#000;">46</div>
<div class="t" style="left:278.00px;top:597.69px;font-size:11px;color:#000;">1st <span style="letter-spacing:1px">...</span></div>
<div class="t" style="left:40.60px;top:612.69px;font-size:11px;color:#000;">Шкаф кухонный</div>
<div class="t" style="left:152.25px;top:612.69px;font-size:11px;color:#000;">60</div>
<div class="t" style="left:187.25px;top:612.69px;font-size:11px;color:#000;">64</div>
<div class="t" style="left:220.25px;top:612.69px;font-size:11px;color:#000;">85</div>
<div class="t" style="left:278.00px;top:612.69px;font-size:11px;color:#000;">1st <span style="letter-spacing:1px">...</span></div>
<div class="t" style="left:40.60px;top:627.69px;font-size:11px;color:#000;">Шкаф платяной</div>
<div class="t" style="left:146.94px;top:627.69px;font-size:11px;color:#000;">115</div>
<div class="t" style="left:187.25px;top:627.69px;font-size:11px;color:#000;">46</div>
<div class="t" style="left:214.12px;top:627.69px;font-size:11px;color:#000;">165</div>
<div class="t" style="left:278.00px;top:627.69px;font-size:11px;color:#000;">1st <span style="letter-spacing:1px">...</span></div>
<div class="t" style="left:40.60px;top:642.69px;font-size:11px;color:#000;transform:scaleX(1.0448);transform-origin:0 0;">Табуретка</div>
<div class="t" style="left:152.25px;top:642.69px;font-size:11px;color:#000;">40</div>
<div class="t" style="left:187.25px;top:642.69px;font-size:11px;color:#000;">40</div>
<div class="t" style="left:220.25px;top:642.69px;font-size:11px;color:#000;">46</div>
<div class="t" style="left:278.00px;top:642.69px;font-size:11px;color:#000;">1st <span style="letter-spacing:1px">...</span></div>
<div class="t" style="left:40.60px;top:657.69px;font-size:11px;color:#000;">Растение</div>
<div class="t" style="left:152.25px;top:657.69px;font-size:11px;color:#000;">58</div>
<div class="t" style="left:187.25px;top:657.69px;font-size:11px;color:#000;">50</div>
<div class="t" style="left:214.12px;top:657.69px;font-size:11px;color:#000;">103</div>
<div class="t" style="left:278.00px;top:657.69px;font-size:11px;color:#000;">1st <span style="letter-spacing:1px">...</span></div>
<div class="t" style="left:40.60px;top:672.69px;font-size:11px;color:#000;">Шкаф платяной</div>
<div class="t" style="left:152.25px;top:672.69px;font-size:11px;color:#000;">70</div>
<div class="t" style="left:178.06px;top:672.69px;font-size:11px;color:#000;">42,5</div>
<div class="t" style="left:220.25px;top:672.69px;font-size:11px;color:#000;">50</div>
<div class="t" style="left:278.00px;top:672.69px;font-size:11px;color:#000;">1st <span style="letter-spacing:1px">...</span></div>
<div class="t" style="left:40.60px;top:687.69px;font-size:11px;color:#000;transform:scaleX(1.0175);transform-origin:0 0;">Скруглённая д<span style="letter-spacing:1px">...</span></div>
<div class="t" style="left:143.06px;top:687.69px;font-size:11px;color:#000;">91,5</div>
<div class="t" style="left:178.06px;top:687.69px;font-size:11px;color:#000;">14,5</div>
<div class="t" style="left:204.94px;top:687.69px;font-size:11px;color:#000;">208,5</div>
<div class="t" style="left:278.00px;top:687.69px;font-size:11px;color:#000;">2nd <span style="letter-spacing:1px">...</span></div>
<div class="t" style="left:40.60px;top:702.69px;font-size:11px;color:#000;transform:scaleX(1.0175);transform-origin:0 0;">Скруглённая д<span style="letter-spacing:1px">...</span></div>
<div class="t" style="left:143.06px;top:702.69px;font-size:11px;color:#000;">91,5</div>
<div class="t" style="left:178.06px;top:702.69px;font-size:11px;color:#000;">14,5</div>
<div class="t" style="left:204.94px;top:702.69px;font-size:11px;color:#000;">208,5</div>
<div class="t" style="left:278.00px;top:702.69px;font-size:11px;color:#000;">2nd <span style="letter-spacing:1px">...</span></div>
<div class="t" style="left:40.60px;top:717.69px;font-size:11px;color:#000;transform:scaleX(1.0175);transform-origin:0 0;">Скруглённая д<span style="letter-spacing:1px">...</span></div>
<div class="t" style="left:143.06px;top:717.69px;font-size:11px;color:#000;">91,5</div>
<div class="t" style="left:178.06px;top:717.69px;font-size:11px;color:#000;">14,5</div>
<div class="t" style="left:204.94px;top:717.69px;font-size:11px;color:#000;">208,5</div>
<div class="t" style="left:278.00px;top:717.69px;font-size:11px;color:#000;">2nd <span style="letter-spacing:1px">...</span></div>
<div class="t" style="left:40.60px;top:732.69px;font-size:11px;color:#000;transform:scaleX(1.0175);transform-origin:0 0;">Скруглённая д<span style="letter-spacing:1px">...</span></div>
<div class="t" style="left:143.06px;top:732.69px;font-size:11px;color:#000;">91,5</div>
<div class="t" style="left:178.06px;top:732.69px;font-size:11px;color:#000;">14,5</div>
<div class="t" style="left:204.94px;top:732.69px;font-size:11px;color:#000;">208,5</div>
<div class="t" style="left:278.00px;top:732.69px;font-size:11px;color:#000;">2nd <span style="letter-spacing:1px">...</span></div>
<div class="t" style="left:40.60px;top:747.69px;font-size:11px;color:#000;transform:scaleX(1.0091);transform-origin:0 0;">Окно, двойное <span style="letter-spacing:1px">...</span></div>
<div class="t" style="left:146.12px;top:747.69px;font-size:11px;color:#000;">132</div>
<div class="t" style="left:178.06px;top:747.69px;font-size:11px;color:#000;">35,4</div>
<div class="t" style="left:214.12px;top:747.69px;font-size:11px;color:#000;">134</div>
<div class="t" style="left:278.00px;top:747.69px;font-size:11px;color:#000;">2nd <span style="letter-spacing:1px">...</span></div>
<div class="t" style="left:40.60px;top:762.69px;font-size:11px;color:#000;">Унитаз</div>
<div class="t" style="left:152.25px;top:762.69px;font-size:11px;color:#000;">40</div>
<div class="t" style="left:187.25px;top:762.69px;font-size:11px;color:#000;">80</div>
<div class="t" style="left:220.25px;top:762.69px;font-size:11px;color:#000;">62</div>
<div class="t" style="left:278.00px;top:762.69px;font-size:11px;color:#000;">1st <span style="letter-spacing:1px">...</span></div>
<div class="t" style="left:40.60px;top:777.69px;font-size:11px;color:#000;">Цилиндр</div>
<div class="t" style="left:146.12px;top:777.69px;font-size:11px;color:#000;">160</div>
<div class="t" style="left:181.12px;top:777.69px;font-size:11px;color:#000;">260</div>
<div class="t" style="left:217.19px;top:777.69px;font-size:11px;color:#000;">0,7</div>
<div class="t" style="left:278.00px;top:777.69px;font-size:11px;color:#000;">1st <span style="letter-spacing:1px">...</span></div>
<div class="t" style="left:40.60px;top:792.69px;font-size:11px;color:#000;">Стол, ночной</div>
<div class="t" style="left:152.25px;top:792.69px;font-size:11px;color:#000;">45</div>
<div class="t" style="left:187.25px;top:792.69px;font-size:11px;color:#000;">85</div>
<div class="t" style="left:220.25px;top:792.69px;font-size:11px;color:#000;">30</div>
<div class="t" style="left:278.00px;top:792.69px;font-size:11px;color:#000;">1st <span style="letter-spacing:1px">...</span></div>
<div class="t" style="left:40.60px;top:807.69px;font-size:11px;color:#000;">Раковина</div>
<div class="t" style="left:152.25px;top:807.69px;font-size:11px;color:#000;">71</div>
<div class="t" style="left:187.25px;top:807.69px;font-size:11px;color:#000;">54</div>
<div class="t" style="left:220.25px;top:807.69px;font-size:11px;color:#000;">97</div>
<div class="t" style="left:278.00px;top:807.69px;font-size:11px;color:#000;">2nd <span style="letter-spacing:1px">...</span></div>
<div class="a" style="left:312px;top:390px;width:18px;height:431px;background:#f0f0f0;"></div>
<div class="a" style="left:313px;top:432px;width:15px;height:88px;background:#cdcdcd;"></div>
<svg style="left:311px;top:415px" width="19" height="410"><path d="M5.5,12 L9.5,8 L13.5,12" stroke="#606060" stroke-width="1.6" fill="none"/><path d="M5.5,395 L9.5,399 L13.5,395" stroke="#606060" stroke-width="1.6" fill="none"/></svg>
<svg style="left:330px;top:78px" width="8" height="20"><path d="M5.5,1 L5.5,6.5 L2,3.7Z M2.5,12.5 L2.5,18 L5.5,15.2Z" fill="#000"/></svg>
<div class="a" style="left:335px;top:75px;width:1px;height:376px;background:#707070;"></div>
<div class="a" style="left:338px;top:79px;width:51px;height:19px;background:#f0f0f0;border:1px solid #d9d9d9;border-bottom:none"></div>
<div class="a" style="left:388px;top:79px;width:54px;height:19px;background:#f0f0f0;border:1px solid #d9d9d9;border-bottom:none"></div>
<div class="a" style="left:441px;top:77px;width:36px;height:22px;background:#fff;border:1px solid #d9d9d9;border-bottom:none;z-index:2"></div>
<div class="a" style="left:476px;top:79px;width:50px;height:19px;background:#f0f0f0;border:1px solid #d9d9d9;border-bottom:none"></div>
<div class="a" style="left:525px;top:79px;width:24px;height:19px;background:#f0f0f0;border:1px solid #d9d9d9;border-bottom:none"></div>
<div class="t" style="left:344.50px;top:83.69px;font-size:11px;color:#000;transform:scaleX(0.9832);transform-origin:0 0;z-index:3">1st floor</div>
<div class="t" style="left:394.00px;top:83.69px;font-size:11px;color:#000;transform:scaleX(0.9803);transform-origin:0 0;z-index:3">2nd floor</div>
<div class="t" style="left:448.00px;top:82.19px;font-size:11px;color:#000;transform:scaleX(1.0044);transform-origin:0 0;z-index:3">Attic</div>
<svg style="left:482px;top:83px;z-index:3" width="12" height="12"><circle cx="6" cy="6" r="5" fill="none" stroke="#444" stroke-width="1.1"/><path d="M3.5,5 H8.5 M3.5,7.5 H8.5" stroke="#444" stroke-width="1.1"/></svg>
<div class="t" style="left:496.00px;top:83.69px;font-size:11px;color:#000;transform:scaleX(1.0323);transform-origin:0 0;z-index:3">Roof</div>
<svg style="left:532px;top:83px;z-index:3" width="12" height="12"><path d="M6,1 V11 M1,6 H11" stroke="#1a1a1a" stroke-width="2.8"/></svg>
<div class="a" style="left:337px;top:99px;width:859px;height:345px;border:1px solid #808080;background:#f0f0f0;z-index:1"></div>
<svg style="left:0;top:0;z-index:2" width="1201" height="825"><clipPath id="gc"><rect x="356" y="118" width="822" height="325"/></clipPath><clipPath id="fc"><rect x="484" y="204" width="375.5" height="240"/></clipPath><pattern id="hatch" patternUnits="userSpaceOnUse" width="9" height="9" patternTransform="translate(0.5,0)"><rect width="9" height="9" fill="#000"/><path d="M-1,10 L10,-1 M-1,1 L1,-1 M8,10 L10,8" stroke="#d4d4d4" stroke-width="0.9"/></pattern><pattern id="hatch2" patternUnits="userSpaceOnUse" width="6" height="6"><rect width="6" height="6" fill="#000"/><path d="M-1,7 L7,-1" stroke="#c8c8c8" stroke-width="1"/></pattern><rect x="356" y="118" width="822" height="325" fill="#fff"/><g clip-path="url(#gc)"><path d="M364.5,118 V443" stroke="#cdcdcd" stroke-width="1"/><path d="M387.5,118 V443" stroke="#8e8e8e" stroke-width="1.2"/><path d="M410.5,118 V443" stroke="#cdcdcd" stroke-width="1"/><path d="M433.5,118 V443" stroke="#cdcdcd" stroke-width="1"/><path d="M456.5,118 V443" stroke="#cdcdcd" stroke-width="1"/><path d="M479.5,118 V443" stroke="#8e8e8e" stroke-width="1.2"/><path d="M502.5,118 V443" stroke="#cdcdcd" stroke-width="1"/><path d="M525.5,118 V443" stroke="#cdcdcd" stroke-width="1"/><path d="M548.5,118 V443" stroke="#cdcdcd" stroke-width="1"/><path d="M570.5,118 V443" stroke="#8e8e8e" stroke-width="1.2"/><path d="M593.5,118 V443" stroke="#cdcdcd" stroke-width="1"/><path d="M616.5,118 V443" stroke="#cdcdcd" stroke-width="1"/><path d="M639.5,118 V443" stroke="#cdcdcd" stroke-width="1"/><path d="M662.5,118 V443" stroke="#8e8e8e" stroke-width="1.2"/><path d="M685.5,118 V443" stroke="#cdcdcd" stroke-width="1"/><path d="M708.5,118 V443" stroke="#cdcdcd" stroke-width="1"/><path d="M731.5,118 V443" stroke="#cdcdcd" stroke-width="1"/><path d="M754.5,118 V443" stroke="#8e8e8e" stroke-width="1.2"/><path d="M777.5,118 V443" stroke="#cdcdcd" stroke-width="1"/><path d="M799.5,118 V443" stroke="#cdcdcd" stroke-width="1"/><path d="M822.5,118 V443" stroke="#cdcdcd" stroke-width="1"/><path d="M845.5,118 V443" stroke="#8e8e8e" stroke-width="1.2"/><path d="M868.5,118 V443" stroke="#cdcdcd" stroke-width="1"/><path d="M891.5,118 V443" stroke="#cdcdcd" stroke-width="1"/><path d="M914.5,118 V443" stroke="#cdcdcd" stroke-width="1"/><path d="M937.5,118 V443" stroke="#8e8e8e" stroke-width="1.2"/><path d="M960.5,118 V443" stroke="#cdcdcd" stroke-width="1"/><path d="M983.5,118 V443" stroke="#cdcdcd" stroke-width="1"/><path d="M1006.5,118 V443" stroke="#cdcdcd" stroke-width="1"/><path d="M1029.5,118 V443" stroke="#8e8e8e" stroke-width="1.2"/><path d="M1051.5,118 V443" stroke="#cdcdcd" stroke-width="1"/><path d="M1074.5,118 V443" stroke="#cdcdcd" stroke-width="1"/><path d="M1097.5,118 V443" stroke="#cdcdcd" stroke-width="1"/><path d="M1120.5,118 V443" stroke="#8e8e8e" stroke-width="1.2"/><path d="M1143.5,118 V443" stroke="#cdcdcd" stroke-width="1"/><path d="M1166.5,118 V443" stroke="#cdcdcd" stroke-width="1"/><path d="M356,130.5 H1178" stroke="#cdcdcd" stroke-width="1"/><path d="M356,153.5 H1178" stroke="#cdcdcd" stroke-width="1"/><path d="M356,176.5 H1178" stroke="#cdcdcd" stroke-width="1"/><path d="M356,199.5 H1178" stroke="#8e8e8e" stroke-width="1.2"/><path d="M356,221.5 H1178" stroke="#cdcdcd" stroke-width="1"/><path d="M356,244.5 H1178" stroke="#cdcdcd" stroke-width="1"/><path d="M356,267.5 H1178" stroke="#cdcdcd" stroke-width="1"/><path d="M356,290.5 H1178" stroke="#8e8e8e" stroke-width="1.2"/><path d="M356,313.5 H1178" stroke="#cdcdcd" stroke-width="1"/><path d="M356,336.5 H1178" stroke="#cdcdcd" stroke-width="1"/><path d="M356,359.5 H1178" stroke="#cdcdcd" stroke-width="1"/><path d="M356,382.5 H1178" stroke="#8e8e8e" stroke-width="1.2"/><path d="M356,405.5 H1178" stroke="#cdcdcd" stroke-width="1"/><path d="M356,428.5 H1178" stroke="#cdcdcd" stroke-width="1"/><rect x="484" y="204" width="375.5" height="240" fill="#7ba3a3"/><g clip-path="url(#fc)"><path d="M502.5,204 V444" stroke="#729b9b" stroke-width="1"/><path d="M525.5,204 V444" stroke="#729b9b" stroke-width="1"/><path d="M548.5,204 V444" stroke="#729b9b" stroke-width="1"/><path d="M570.5,204 V444" stroke="#628c8c" stroke-width="1.2"/><path d="M593.5,204 V444" stroke="#729b9b" stroke-width="1"/><path d="M616.5,204 V444" stroke="#729b9b" stroke-width="1"/><path d="M639.5,204 V444" stroke="#729b9b" stroke-width="1"/><path d="M662.5,204 V444" stroke="#628c8c" stroke-width="1.2"/><path d="M685.5,204 V444" stroke="#729b9b" stroke-width="1"/><path d="M708.5,204 V444" stroke="#729b9b" stroke-width="1"/><path d="M731.5,204 V444" stroke="#729b9b" stroke-width="1"/><path d="M754.5,204 V444" stroke="#628c8c" stroke-width="1.2"/><path d="M777.5,204 V444" stroke="#729b9b" stroke-width="1"/><path d="M799.5,204 V444" stroke="#729b9b" stroke-width="1"/><path d="M822.5,204 V444" stroke="#729b9b" stroke-width="1"/><path d="M845.5,204 V444" stroke="#628c8c" stroke-width="1.2"/><path d="M484,221.5 H860" stroke="#729b9b" stroke-width="1"/><path d="M484,244.5 H860" stroke="#729b9b" stroke-width="1"/><path d="M484,267.5 H860" stroke="#729b9b" stroke-width="1"/><path d="M484,290.5 H860" stroke="#628c8c" stroke-width="1.2"/><path d="M484,313.5 H860" stroke="#729b9b" stroke-width="1"/><path d="M484,336.5 H860" stroke="#729b9b" stroke-width="1"/><path d="M484,359.5 H860" stroke="#729b9b" stroke-width="1"/><path d="M484,382.5 H860" stroke="#628c8c" stroke-width="1.2"/><path d="M484,405.5 H860" stroke="#729b9b" stroke-width="1"/><path d="M484,428.5 H860" stroke="#729b9b" stroke-width="1"/><path d="M484,356 H626 M585,204 V356 M531,356 V309 H585 M545,309 V271 M730,204 V367 M685,328 H730 M730,339 H799 V365 H860 M672,358 V444" stroke="#84a9a9" stroke-width="3" fill="none"/><path d="M484,356 H626 M585,204 V356 M531,356 V309 H585 M545,309 V271 M730,204 V367 M685,328 H730 M730,339 H799 V365 H860 M672,358 V444" stroke="#7ba3a3" stroke-width="1" fill="none"/></g><path d="M471,191 H872 V460 H471Z M484,204 V460 H859 V204Z" fill="url(#hatch)" fill-rule="evenodd"/><path d="M471.6,460 V191.6 H871.4 V460 M483.4,460 V204.4 H859.6 V460" stroke="#000" stroke-width="1.2" fill="none"/><rect x="637" y="192.5" width="68" height="11" fill="#fff"/><path d="M637,192 H705 M637,203.5 H705" stroke="#000" stroke-width="1"/><path d="M627.5,204 V244" stroke="#000" stroke-width="1.6"/><path d="M626,244 H676 V309 H685 V358 H626Z" fill="url(#hatch)"/><path d="M626.75,244.75 H675.25 V309.75 H684.25 V357.25 H626.75Z" stroke="#000" stroke-width="1.5" fill="none"/><rect x="631" y="245" width="38" height="108" fill="#22223f"/><path d="M649.5,262 V336.5 H641" stroke="#000" stroke-width="1.1" fill="none"/><path d="M646.5,268 L649.5,261 L652.5,268" stroke="#000" stroke-width="1" fill="none"/><path d="M644,441 Q652,439 658,443 M686,443 Q692,439 699,441" stroke="#000" stroke-width="0.8" fill="none"/><path d="M471,181.5 H872 M471.5,177 V191 M871.5,177 V191 M468,185 L475,178 M868,185 L875,178" stroke="#000" stroke-width="1" fill="none"/><path d="M460.5,191 V444 M456,191.5 H471 M457,187.5 L464,195" stroke="#000" stroke-width="1" fill="none"/><circle cx="403" cy="212.5" r="22.5" fill="none" stroke="#222" stroke-width="0.8"/><path d="M375,212.5 H380.5 M425.5,212.5 H431 M403,235 V240" stroke="#444" stroke-width="0.8"/><path d="M403,189 L396.5,234 L403,227 L409.5,234 Z" fill="none" stroke="#000" stroke-width="1.3" stroke-linejoin="miter"/><rect x="402" y="189" width="2" height="6" fill="#000"/><rect x="402.5" y="212" width="1.2" height="1.2" fill="#000"/></g></svg>
<svg style="left:397px;top:179px;z-index:3" width="12" height="10"><path d="M1,9 V1 L7,9 V1" stroke="#000" stroke-width="1.6" fill="none" transform="translate(1.5,0)"/></svg>
<div class="t" style="left:656.50px;top:148.00px;font-size:13px;color:#8a0e0e;transform:scaleX(1.1075);transform-origin:0 0;z-index:3">Attic</div>
<div class="t" style="left:664.50px;top:172.30px;font-size:8.5px;color:#111;transform:scaleX(0.9153);transform-origin:0 0;z-index:3">873</div>
<div class="t" style="left:748.00px;top:295.69px;font-size:11px;color:#111;transform:scaleX(0.9810);transform-origin:0 0;z-index:3">Attic</div>
<div class="t" style="left:743.00px;top:315.69px;font-size:11px;color:#111;transform:scaleX(0.9798);transform-origin:0 0;z-index:3">44,56 м²</div>
<svg style="left:0;top:0;z-index:3" width="1201" height="825"><text transform="translate(458.5,342) rotate(-90)" font-family="Liberation Sans" font-size="8.5">629</text></svg>
<svg style="left:0;top:0;z-index:2" width="1201" height="825"><rect x="338" y="100" width="857" height="18" fill="#f0f0f0"/><rect x="338" y="100" width="18" height="343" fill="#f0f0f0"/><path d="M356,117.5 H1178 M355.5,118 V443" stroke="#555" stroke-width="1"/><path d="M364.5,113 V118" stroke="#555" stroke-width="1"/><path d="M387.5,101 V118" stroke="#000" stroke-width="1.7" stroke-linecap="round"/><path d="M410.5,113 V118" stroke="#555" stroke-width="1"/><path d="M433.5,113 V118" stroke="#555" stroke-width="1"/><path d="M456.5,113 V118" stroke="#555" stroke-width="1"/><path d="M479.5,101 V118" stroke="#000" stroke-width="1.7" stroke-linecap="round"/><path d="M502.5,113 V118" stroke="#555" stroke-width="1"/><path d="M525.5,113 V118" stroke="#555" stroke-width="1"/><path d="M548.5,113 V118" stroke="#555" stroke-width="1"/><path d="M570.5,101 V118" stroke="#000" stroke-width="1.7" stroke-linecap="round"/><path d="M593.5,113 V118" stroke="#555" stroke-width="1"/><path d="M616.5,113 V118" stroke="#555" stroke-width="1"/><path d="M639.5,113 V118" stroke="#555" stroke-width="1"/><path d="M662.5,101 V118" stroke="#000" stroke-width="1.7" stroke-linecap="round"/><path d="M685.5,113 V118" stroke="#555" stroke-width="1"/><path d="M708.5,113 V118" stroke="#555" stroke-width="1"/><path d="M731.5,113 V118" stroke="#555" stroke-width="1"/><path d="M754.5,101 V118" stroke="#000" stroke-width="1.7" stroke-linecap="round"/><path d="M777.5,113 V118" stroke="#555" stroke-width="1"/><path d="M799.5,113 V118" stroke="#555" stroke-width="1"/><path d="M822.5,113 V118" stroke="#555" stroke-width="1"/><path d="M845.5,101 V118" stroke="#000" stroke-width="1.7" stroke-linecap="round"/><path d="M868.5,113 V118" stroke="#555" stroke-width="1"/><path d="M891.5,113 V118" stroke="#555" stroke-width="1"/><path d="M914.5,113 V118" stroke="#555" stroke-width="1"/><path d="M937.5,101 V118" stroke="#000" stroke-width="1.7" stroke-linecap="round"/><path d="M960.5,113 V118" stroke="#555" stroke-width="1"/><path d="M983.5,113 V118" stroke="#555" stroke-width="1"/><path d="M1006.5,113 V118" stroke="#555" stroke-width="1"/><path d="M1029.5,101 V118" stroke="#000" stroke-width="1.7" stroke-linecap="round"/><path d="M1051.5,113 V118" stroke="#555" stroke-width="1"/><path d="M1074.5,113 V118" stroke="#555" stroke-width="1"/><path d="M1097.5,113 V118" stroke="#555" stroke-width="1"/><path d="M1120.5,101 V118" stroke="#000" stroke-width="1.7" stroke-linecap="round"/><path d="M1143.5,113 V118" stroke="#555" stroke-width="1"/><path d="M1166.5,113 V118" stroke="#555" stroke-width="1"/><path d="M351,130.5 H356" stroke="#555" stroke-width="1"/><path d="M351,153.5 H356" stroke="#555" stroke-width="1"/><path d="M351,176.5 H356" stroke="#555" stroke-width="1"/><path d="M339,199.5 H356" stroke="#000" stroke-width="1.7" stroke-linecap="round"/><path d="M351,221.5 H356" stroke="#555" stroke-width="1"/><path d="M351,244.5 H356" stroke="#555" stroke-width="1"/><path d="M351,267.5 H356" stroke="#555" stroke-width="1"/><path d="M339,290.5 H356" stroke="#000" stroke-width="1.7" stroke-linecap="round"/><path d="M351,313.5 H356" stroke="#555" stroke-width="1"/><path d="M351,336.5 H356" stroke="#555" stroke-width="1"/><path d="M351,359.5 H356" stroke="#555" stroke-width="1"/><path d="M339,382.5 H356" stroke="#000" stroke-width="1.7" stroke-linecap="round"/><path d="M351,405.5 H356" stroke="#555" stroke-width="1"/><path d="M351,428.5 H356" stroke="#555" stroke-width="1"/><rect x="342.5" y="104" width="4.5" height="7" rx="1.2" fill="none" stroke="#9a9a9a" stroke-width="1.2"/><rect x="344.8" y="109.5" width="9.5" height="7" rx="1" fill="#ece030" stroke="#c8b400" stroke-width="0.8"/><rect x="345.5" y="118.5" width="1.2" height="1.2" fill="#000"/><rect x="1178" y="118" width="17" height="325" fill="#f0f0f0"/><rect x="1179" y="136" width="15" height="167" fill="#cdcdcd"/><path d="M1182.5,132 L1186.5,128 L1190.5,132 M1182.5,432.5 L1186.5,436.5 L1190.5,432.5" stroke="#555" stroke-width="1.6" fill="none"/></svg>
<div class="t" style="left:391.00px;top:102.49px;font-size:11px;color:#000;z-index:3">-2</div>
<div class="t" style="left:483.00px;top:102.49px;font-size:11px;color:#000;z-index:3">0м</div>
<div class="t" style="left:574.00px;top:102.49px;font-size:11px;color:#000;z-index:3">2</div>
<div class="t" style="left:666.00px;top:102.49px;font-size:11px;color:#000;z-index:3">4</div>
<div class="t" style="left:758.00px;top:102.49px;font-size:11px;color:#000;z-index:3">6</div>
<div class="t" style="left:849.00px;top:102.49px;font-size:11px;color:#000;z-index:3">8</div>
<div class="t" style="left:941.00px;top:102.49px;font-size:11px;color:#000;z-index:3">10</div>
<div class="t" style="left:1033.00px;top:102.49px;font-size:11px;color:#000;z-index:3">12</div>
<div class="t" style="left:1124.00px;top:102.49px;font-size:11px;color:#000;z-index:3">14</div>
<svg style="left:0;top:0;z-index:3" width="1201" height="825"><text transform="translate(349.3,216.0) rotate(-90)" font-family="Liberation Sans" font-size="11">0м</text><text transform="translate(349.3,300.0) rotate(-90)" font-family="Liberation Sans" font-size="11">2</text><text transform="translate(349.3,392.0) rotate(-90)" font-family="Liberation Sans" font-size="11">4</text></svg>
<svg style="left:336px;top:444px;z-index:3" width="30" height="8"><path d="M4,6.5 L7,3 L10,6.5Z M15,3 L21,3 L18,6.5Z" fill="#000"/></svg>
<svg style="left:0;top:0;z-index:4" width="1201" height="825"><clipPath id="vc"><rect x="338" y="454" width="859" height="367"/></clipPath><linearGradient id="ga" x1="0" y1="0" x2="0" y2="1"><stop offset="0" stop-color="#a8e080"/><stop offset="0.5" stop-color="#5fbf22"/><stop offset="1" stop-color="#3f9a12"/></linearGradient><g clip-path="url(#vc)"><rect x="338" y="454" width="859" height="67" fill="#cfe3f8"/><rect x="338" y="521" width="859" height="300" fill="#467600"/><polygon points="830.7,454 842,454 990,560 686,576 709.7,575" fill="#00afbb" /><polygon points="842,454 850,454 992.7,559.3 982.7,559.3" fill="#020c18" /><polygon points="813,510 857,510 857,538.5 813,538" fill="#8fd9e3" /><polygon points="820,511 856,511 856,523 820,523" fill="#cbd9df" /><polygon points="820,523 856,523 856,538 820,537.5" fill="#8e9e6a" /><polygon points="815,512 818,512 818,536 815,536" fill="#b8eef4" /><polygon points="670,547 678,547 678,556 675,556" fill="#00a0ac" /><polygon points="677,556 700,566 760,572 686,577.5" fill="#2aa6b4" /><polygon points="702.9,454 708,454 708,572 702.9,572" fill="#2aa6b4" /><polygon points="708,454 754,454 754,572 708,572" fill="#21838f" /><polygon points="677,520 708,520 708,572.5 690,573 677,560" fill="#2aa6b4" /><polygon points="708,520 804.2,520 804.2,567.3 708,572" fill="#21838f" /><polygon points="760,570 804,567.3 840,565.5 840,567 760,571.5" fill="#6cc4cc" /><polygon points="685.5,575.5 1009,560 998.5,745 990,821 690,821" fill="#c4c4c4" /><path d="M685.5,575.8 L1009,560.3" stroke="#2a2a2a" stroke-width="1.2"/><polygon points="548,454 580,454 686,590 690,821 545,821 514,786 500.5,552 505,551" fill="#f4f4f4" /><polygon points="580,454 594,454 690,574 686,576 686,590" fill="#020c18" /><polygon points="551,488 574,486 578,558.6 555,556" fill="#8fe3ef" /><polygon points="553.92,490.50208 565.42,489.59407999999996 568.7,547.69272 557.2,546.71472" fill="#6eb2bc" /><polygon points="567.92,492.97808000000003 571.6,492.72432000000003 573.04,518.6616 569.3599999999999,518.6504" fill="#c9d6dc" /><polygon points="569.3599999999999,518.6504 573.04,518.6616 574.64,547.4808 570.9599999999999,547.1752" fill="#8fa06c" /><polygon points="554.52,547.84 577.52,549.888 578,558.6 555,556.0" fill="#a8f2fa" /><polygon points="522.8,590 541.8,595.2 545.2,661.5 526.3,650.5" fill="#8fe3ef" /><polygon points="525.2195199999999,593.0718400000001 534.7175199999999,595.7878400000001 537.53668,648.3465600000001 528.0796799999999,643.25256" fill="#6eb2bc" /><polygon points="536.78852,599.56484 539.82708,600.48036 541.226,627.3779999999999 538.194,626.082" fill="#d8c8c4" /><polygon points="538.194,626.082 541.226,627.3779999999999 542.4202,650.3394 539.3938,648.7185999999999" fill="#c8b8b4" /><polygon points="525.88,643.24 544.792,653.544 545.2,661.5 526.3,650.5" fill="#a8f2fa" /><polygon points="599.8,610.8 633.3,620 636.8,709.9 604,692" fill="#8fe3ef" /><polygon points="603.9846399999999,615.19376 620.7206399999999,619.96776 623.80876,690.97484 607.35976,682.63384" fill="#6eb2bc" /><polygon points="624.2526399999999,625.29576 629.6025599999999,626.8930399999999 631.4304,672.2095999999999 626.1376,669.9024000000001" fill="#c8dcc0" /><polygon points="626.1376,669.9024000000001 631.4304,672.2095999999999 632.3263999999999,694.4236 627.0616,691.7684" fill="#a8b898" /><polygon points="603.496,682.256 636.38,699.112 636.8,709.9 604.0,692.0" fill="#a8f2fa" /><polygon points="529.7,711.6 548.7,724.7 552.2,788 533.2,768" fill="#8fe3ef" /><polygon points="532.12,715.46112 541.62,722.1491199999999 544.49,771.90508 534.99,762.38808" fill="#6eb2bc" /><polygon points="543.695,726.55512 546.7350000000001,728.75048 548.5200000000001,760.6112 545.48,757.8528" fill="#c4d8d8" /><polygon points="545.48,757.8528 548.5200000000001,760.6112 549.3950000000001,776.2292 546.355,773.1948" fill="#8aa0c0" /><polygon points="532.7800000000001,761.232 551.7800000000001,780.404 552.2,788.0 533.2,768.0" fill="#a8f2fa" /><polygon points="605.7,768.6 638.5,794.8 639.5,821 607,821" fill="#8fe3ef" /><polygon points="608,773 622,783 623,821 609,821" fill="#6eb2bc" /><polygon points="625,785 636,793 637,821 626,821" fill="#b9d2d6" /><polygon points="565.3,745.5 584,755.8 586.7,821 567,821" fill="#5a5a5a" /><polygon points="576,752 580,754 582,821 578,821" fill="#6e6e6e" /><polygon points="718.8,805 985,734.8 1161,821 725,821" fill="#882a24" /></g><circle cx="366.5" cy="483.5" r="25" fill="none" stroke="#1a1a1a" stroke-width="1.2"/><path transform="rotate(0 366.5 483.5)" d="M366.5,459.5 L374,468.5 L370,468.5 L370,473.5 L363,473.5 L363,468.5 L359,468.5 Z" fill="url(#ga)" stroke="#3b8a12" stroke-width="0.8"/><path transform="rotate(90 366.5 483.5)" d="M366.5,459.5 L374,468.5 L370,468.5 L370,473.5 L363,473.5 L363,468.5 L359,468.5 Z" fill="url(#ga)" stroke="#3b8a12" stroke-width="0.8"/><path transform="rotate(180 366.5 483.5)" d="M366.5,459.5 L374,468.5 L370,468.5 L370,473.5 L363,473.5 L363,468.5 L359,468.5 Z" fill="url(#ga)" stroke="#3b8a12" stroke-width="0.8"/><path transform="rotate(270 366.5 483.5)" d="M366.5,459.5 L374,468.5 L370,468.5 L370,473.5 L363,473.5 L363,468.5 L359,468.5 Z" fill="url(#ga)" stroke="#3b8a12" stroke-width="0.8"/><path d="M366.5,475.5 L374.5,482.5 L358.5,482.5Z M366.5,491.5 L374.5,484.5 L358.5,484.5Z" fill="#54a820" stroke="#3b8a12" stroke-width="0.6"/></svg>
<div class="a" style="left:335px;top:451px;width:1px;height:374px;background:#6e6e6e;z-index:4"></div>
<div class="a" style="left:335px;top:451px;width:865px;height:1px;background:#5a5a5a;z-index:4"></div>
<div class="a" style="left:336px;top:445px;width:863px;height:1px;background:#ffffff;z-index:4"></div>
<div class="a" style="left:336px;top:452px;width:863px;height:371px;border:2px solid #0078d7;z-index:5"></div>
<div class="a" style="left:1199px;top:452px;width:1px;height:372px;background:#fff;z-index:5"></div>
<div class="a" style="left:336px;top:823px;width:864px;height:1px;background:#fff;z-index:5"></div>
<div class="a" style="left:0;top:0;width:1201px;height:825px;border:1px solid #6e6e6e;z-index:50;pointer-events:none"></div>
</body></html>
